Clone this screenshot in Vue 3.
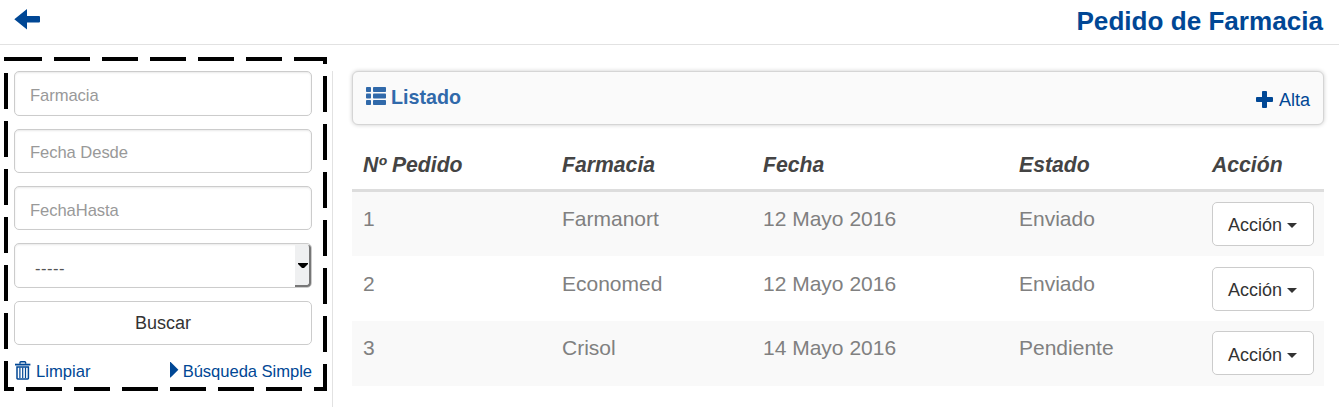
<script setup>
const rows = [
  { id: 1, farmacia: 'Farmanort', fecha: '12 Mayo 2016', estado: 'Enviado' },
  { id: 2, farmacia: 'Economed', fecha: '12 Mayo 2016', estado: 'Enviado' },
  { id: 3, farmacia: 'Crisol', fecha: '14 Mayo 2016', estado: 'Pendiente' },
]
</script>

<template>
  <div class="page">
    <header class="topbar">
      <a class="back">
        <svg width="28" height="22" viewBox="0 0 28 22"><path d="M0.3 10.3 L13 0 V7 H25 Q26 7 26 8 V12.6 Q26 13.6 25 13.6 H13 V20.6 Z" fill="#004795" /></svg>
      </a>
      <h1>Pedido de Farmacia</h1>
    </header>
    <div class="body">
      <aside class="sidebar">
        <svg class="frame" width="325" height="336" viewBox="0 0 325 336"><rect x="3" y="3" width="319" height="330" fill="none" stroke="#000" stroke-width="4" stroke-dasharray="36 12" /></svg>
        <form class="filters" @submit.prevent>
          <input class="field" placeholder="Farmacia" />
          <input class="field" placeholder="Fecha Desde" />
          <input class="field" placeholder="FechaHasta" />
          <div class="field select">
            <span>-----</span>
            <i class="drop"><svg width="10" height="5" viewBox="0 0 10 5"><path d="M0 0H10V1L6 5H4L0 1Z" fill="#000" /></svg></i>
          </div>
          <button class="btn search">Buscar</button>
          <div class="links">
            <a class="clear">
              <svg width="16" height="19" viewBox="0 0 16 19" fill="none" stroke="#004795"><path d="M5 2.8V1.6Q5 .8 5.8 .8H9.8Q10.6 .8 10.6 1.6V2.8" stroke-width="1.4" /><path d="M0 3.6H15.4" stroke-width="1.8" /><path d="M2 6H13.4V17.3Q13.4 18 12.7 18H2.7Q2 18 2 17.3Z" stroke-width="1.5" /><path d="M4.9 6.5V17M7.7 6.5V17M10.5 6.5V17" stroke-width="1.2" /></svg>
              <span>Limpiar</span>
            </a>
            <a class="simple">
              <svg width="9" height="16" viewBox="0 0 9 16"><path d="M0 0H.6L8.4 7.8L.6 15.6H0Z" fill="#004795" /></svg>
              <span>Búsqueda Simple</span>
            </a>
          </div>
        </form>
      </aside>
      <main>
        <div class="panel">
          <h2>
            <svg width="20" height="18" viewBox="0 0 20 18" fill="#3069aa"><rect width="5" height="5" rx=".8" /><rect x="7" width="13" height="5" rx=".8" /><rect y="6.5" width="5" height="5" rx=".8" /><rect x="7" y="6.5" width="13" height="5" rx=".8" /><rect y="13" width="5" height="5" rx=".8" /><rect x="7" y="13" width="13" height="5" rx=".8" /></svg>
            <span>Listado</span>
          </h2>
          <a class="add">
            <svg width="17" height="17" viewBox="0 0 17 17"><path d="M6.9 0H10.1Q11 0 11 .9V6H16.1Q17 6 17 6.9V10.1Q17 11 16.1 11H11V16.1Q11 17 10.1 17H6.9Q6 17 6 16.1V11H.9Q0 11 0 10.1V6.9Q0 6 .9 6H6V.9Q6 0 6.9 0Z" fill="#004795" /></svg>
            <span>Alta</span>
          </a>
        </div>
        <div class="row head">
          <span>Nº Pedido</span><span>Farmacia</span><span>Fecha</span><span>Estado</span><span>Acción</span>
        </div>
        <div v-for="r in rows" :key="r.id" class="row item">
          <span>{{ r.id }}</span><span>{{ r.farmacia }}</span><span>{{ r.fecha }}</span><span>{{ r.estado }}</span>
          <button class="btn action">Acción<svg width="10" height="5" viewBox="0 0 10 5"><path d="M0 0H10L5 5Z" fill="#333" /></svg></button>
        </div>
      </main>
    </div>
  </div>
</template>

<style>
body { margin: 0; background: #fff; overflow: hidden; }
</style>

<style scoped>
* { box-sizing: border-box; }
.page { height: 407px; font-family: "Liberation Sans", Arial, sans-serif; color: #333; overflow: hidden; }
.topbar { height: 45px; border-bottom: 1px solid #e2e2e2; display: flex; justify-content: space-between; padding: 0 16px 0 14px; }
.back { padding-top: 9px; }
.back svg { display: block; }
h1 { margin: 6px 0 0; font-size: 26.1px; line-height: 30px; color: #004795; font-weight: bold; }
.body { display: flex; }
.sidebar { position: relative; width: 333px; height: 336px; margin-top: 26px; border-right: 1px solid #e2e2e2; padding: .33px 20px 0 14px; }
.frame { position: absolute; left: 3px; top: -15px; pointer-events: none; }
.filters { display: flex; flex-direction: column; gap: 12.93px; }
.field { display: block; width: 298px; height: 44.4px; border: 1px solid #ccc; border-radius: 5px; background: #fff; padding: 5px 15px 0; font: 16.6px "Liberation Sans", Arial, sans-serif; letter-spacing: -.07px; color: #555; box-shadow: inset 0 1px 2px rgba(0, 0, 0, .09); outline: none; }
.field::placeholder { color: #999; opacity: 1; }
.select { display: flex; align-items: center; justify-content: space-between; padding: 0 0 0 20px; }
.select span { padding-top: 7px; letter-spacing: .5px; }
.drop { align-self: stretch; display: flex; align-items: center; justify-content: center; width: 16px; margin-top: 1px; padding: 1px 0 0 1px; background: #eff0f1; border-right: 2px solid #777; border-bottom: 2px solid #777; border-bottom-right-radius: 4px; border-top-right-radius: 3px; }
.btn { background: #fff; border: 1px solid #ccc; border-radius: 5px; font: 18px "Liberation Sans", Arial, sans-serif; color: #333; padding: 0; }
.search { width: 298px; height: 44.4px; padding-top: 2px; }
.links { display: flex; justify-content: space-between; width: 298px; color: #004795; font-size: 16.6px; line-height: 20px; margin-top: 2px; }
.links a { display: flex; }
.clear svg { margin: 1px 5px 0 1px; }
.clear span { padding-top: 2px; }
.simple svg { margin: 2px 4px 0 0; }
.simple span { padding-top: 2px; letter-spacing: -.05px; }
main { width: 972px; margin: 26px 0 0 19px; }
.panel { height: 54px; border: 1px solid #d5d5d5; border-radius: 6px; background: #fafafa; box-shadow: 0 0 4px rgba(0, 0, 0, .2); display: flex; justify-content: space-between; padding: 0 13px; }
h2 { display: flex; margin: 14px 0 0; font-size: 19.7px; line-height: 22px; color: #3069aa; }
h2 svg { margin: 1px 5px 0 0; }
.add { display: flex; color: #004795; font-size: 18px; line-height: 20px; margin-top: 18px; }
.add svg { margin: 1px 6px 0 0; }
.row { display: grid; grid-template-columns: 199px 201px 256px 193px 1fr; padding-left: 11px; font-size: 21px; line-height: 24px; }
.head { height: 66.7px; border-bottom: 3px solid #ddd; padding-top: 28px; font-weight: bold; font-style: italic; font-size: 21.2px; color: #444; }
.item { height: 64.67px; color: #808080; align-items: start; }
.item:nth-child(even) { background: #fff; }
.item:nth-child(odd) { background: #f9f9f9; }
.item span { padding-top: 15.4px; }
.action { width: 102px; height: 44px; margin-top: 10.3px; display: flex; align-items: center; justify-content: center; gap: 5px; padding: 4px 1px 0 0; }
</style>
